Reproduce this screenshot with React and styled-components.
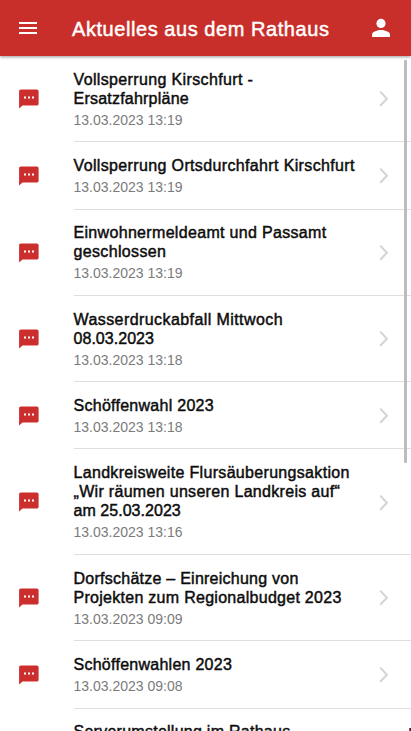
import React from 'react';
import styled, { createGlobalStyle } from 'styled-components';

const GlobalStyle = createGlobalStyle`
  * { box-sizing: border-box; }
  html, body { margin: 0; height: 100%; overflow: hidden; background: #fff; }
  body { font-family: "Liberation Sans", Arial, sans-serif; }
`;

const Screen = styled.div`
  position: relative;
  display: flex;
  flex-direction: column;
  width: 411px;
  height: 731px;
  overflow: hidden;
  background: #fff;
`;

const Header = styled.header`
  display: flex;
  align-items: center;
  flex: none;
  height: 56px;
  padding: 0 18px 0 16px;
  background: #c92f2a;
  color: #fff;
  box-shadow: 0 1px 3px rgba(0, 0, 0, 0.4);
  z-index: 1;
`;

const IconButton = styled.button`
  display: flex;
  padding: 0;
  border: 0;
  background: none;
  color: inherit;
`;

const Heading = styled.h1`
  flex: 1;
  margin: 1px 0 0 32px;
  font-size: 20px;
  font-weight: 400;
  line-height: 24px;
  letter-spacing: 0.56px;
  -webkit-text-stroke: 0.45px currentColor;
  white-space: nowrap;
`;

const Content = styled.main`
  position: relative;
  flex: 1;
  min-height: 0;
  overflow: hidden;
`;

const List = styled.ul`
  margin: 0;
  padding: 0;
  list-style: none;
`;

const Row = styled.li`
  display: flex;
  align-items: center;
`;

const Leading = styled.div`
  display: flex;
  flex: none;
  width: 73.5px;
  padding-left: 17px;
`;

const Body = styled.div`
  display: flex;
  flex: 1;
  align-items: center;
  justify-content: space-between;
  padding: 13.6px 21.5px 12.1px 0;
  border-bottom: 1px solid #dedede;
`;

const Title = styled.div`
  color: #0c0c0c;
  font-size: 16px;
  line-height: 19.2px;
  -webkit-text-stroke: 0.45px currentColor;
  white-space: nowrap;
`;

const Line = styled.span`
  display: block;
  letter-spacing: ${(p) => p.$tracking}px;
`;

const Time = styled.time`
  display: block;
  margin-top: 3.7px;
  color: #7b7b7b;
  font-size: 14px;
  line-height: 17.6px;
`;

const ScrollThumb = styled.div`
  position: absolute;
  top: 4px;
  right: 4px;
  width: 3px;
  height: 403px;
  border-radius: 1px;
  background: #bcbcbc;
`;

const CornerMark = styled.div`
  position: absolute;
  right: 0;
  bottom: 0;
  width: 2px;
  height: 3px;
  background: #c4383c;
  border-right: 1px solid #23304f;
`;

const MenuIcon = () => (
  <svg width="24" height="24" viewBox="0 0 24 24" fill="currentColor">
    <path d="M3 18h18v-2H3v2zm0-5h18v-2H3v2zm0-7v2h18V6H3z" />
  </svg>
);

const PersonIcon = () => (
  <svg width="24" height="24" viewBox="0 0 24 24" fill="currentColor">
    <circle cx="12" cy="7.4" r="4.6" />
    <path d="M3 21v-2.3c0-3 6-4.6 9-4.6s9 1.6 9 4.6V21z" />
  </svg>
);

const MessageIcon = () => (
  <svg width="24" height="24" viewBox="0 0 24 24">
    <path d="M3.900 2.600h15.900c1 0 1.800.8 1.800 1.800v12.300c0 1-.8 1.800-1.800 1.800H5.500L2.100 21.600V4.400c0-1 .8-1.800 1.800-1.800z" fill="#cb2e2c" />
    <path d="M7 9.500h2v2H7zM11 9.500h2v2h-2zM15 9.500h2v2h-2z" fill="#fff" />
  </svg>
);

const Chevron = () => (
  <svg width="12" height="18" viewBox="0 0 12 18" fill="none" stroke="#d4d4d4" strokeWidth="2">
    <path d="M2.200 1.600L8.900 8.700 2.200 15.800" />
  </svg>
);

const news = [
  { lines: [['Vollsperrung Kirschfurt -', 0.36], ['Ersatzfahrpläne', 0.22]], time: '13.03.2023 13:19' },
  { lines: [['Vollsperrung Ortsdurchfahrt Kirschfurt', 0.36]], time: '13.03.2023 13:19' },
  { lines: [['Einwohnermeldeamt und Passamt', 0.32], ['geschlossen', 0.35]], time: '13.03.2023 13:19' },
  { lines: [['Wasserdruckabfall Mittwoch', 0.42], ['08.03.2023', 0.04]], time: '13.03.2023 13:18' },
  { lines: [['Schöffenwahl 2023', 0.27]], time: '13.03.2023 13:18' },
  { lines: [['Landkreisweite Flursäuberungsaktion', 0.32], ['„Wir räumen unseren Landkreis auf“', 0.31], ['am 25.03.2023', 0.04]], time: '13.03.2023 13:16' },
  { lines: [['Dorfschätze – Einreichung von', 0.25], ['Projekten zum Regionalbudget 2023', 0.28]], time: '13.03.2023 09:09' },
  { lines: [['Schöffenwahlen 2023', 0.26]], time: '13.03.2023 09:08' },
  { lines: [['Serverumstellung im Rathaus', 0.26]], time: '13.03.2023 09:08' },
];

const NewsRow = ({ item }) => (
  <Row>
    <Leading><MessageIcon /></Leading>
    <Body>
      <div>
        <Title>
          {item.lines.map(([text, tracking]) => (
            <Line key={text} $tracking={tracking}>{text}</Line>
          ))}
        </Title>
        <Time>{item.time}</Time>
      </div>
      <Chevron />
    </Body>
  </Row>
);

export default function App() {
  return (
    <Screen>
      <GlobalStyle />
      <Header>
        <IconButton aria-label="Menü"><MenuIcon /></IconButton>
        <Heading>Aktuelles aus dem Rathaus</Heading>
        <IconButton aria-label="Profil"><PersonIcon /></IconButton>
      </Header>
      <Content>
        <List>
          {news.map((item) => <NewsRow key={item.lines[0][0]} item={item} />)}
        </List>
        <ScrollThumb />
      </Content>
      <CornerMark />
    </Screen>
  );
}
